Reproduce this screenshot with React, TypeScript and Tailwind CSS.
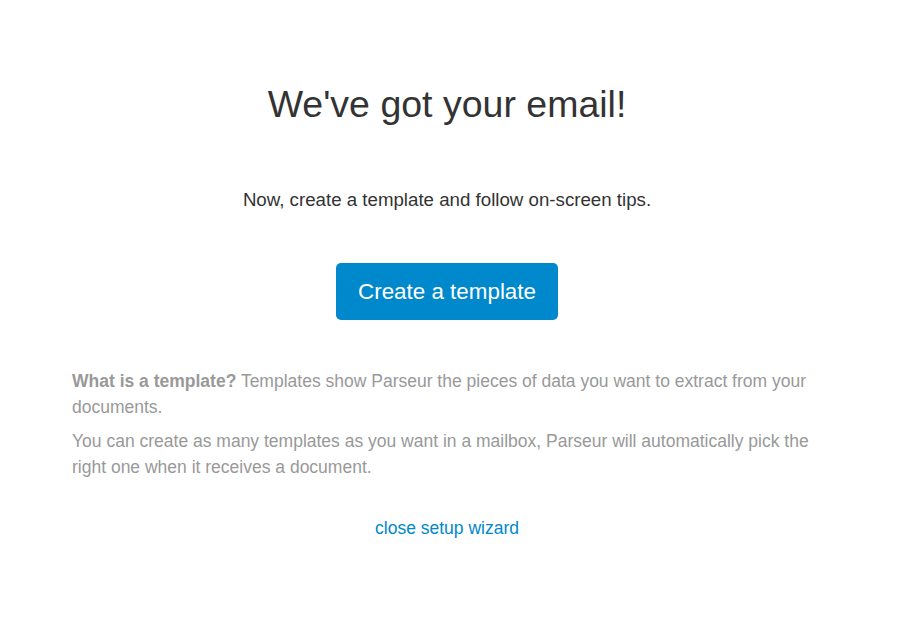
export default function App() {
  return (
    <div className="min-h-screen bg-white font-['Liberation_Sans',Arial,sans-serif]">
      <div className="ml-[72px] w-[750px] pt-[80px] pb-10">
        <h1 className="text-center text-[37.5px] leading-[48px] text-[#333333]">We've got your email!</h1>

        <p className="mt-[60px] text-center text-[18.7px] leading-[24px] text-[#333333]">
          Now, create a template and follow on-screen tips.
        </p>

        <div className="mt-[51px] flex justify-center">
          <button className="h-[57px] rounded-[5px] bg-[#0088cc] px-[22px] text-[22.4px] text-white">
            Create a template
          </button>
        </div>

        <div className="mt-[48px] text-[17.5px] leading-[26px] text-[#999999]">
          <p>
            <b>What is a template?</b> Templates show Parseur the pieces of data you want to extract from your
            documents.
          </p>
          <p className="mt-[8px]">
            You can create as many templates as you want in a mailbox, Parseur will automatically pick the right
            one when it receives a document.
          </p>
        </div>

        <div className="mt-[35px] text-center">
          <a className="text-[17.5px] text-[#0088cc]" href="#">close setup wizard</a>
        </div>
      </div>
    </div>
  );
}
